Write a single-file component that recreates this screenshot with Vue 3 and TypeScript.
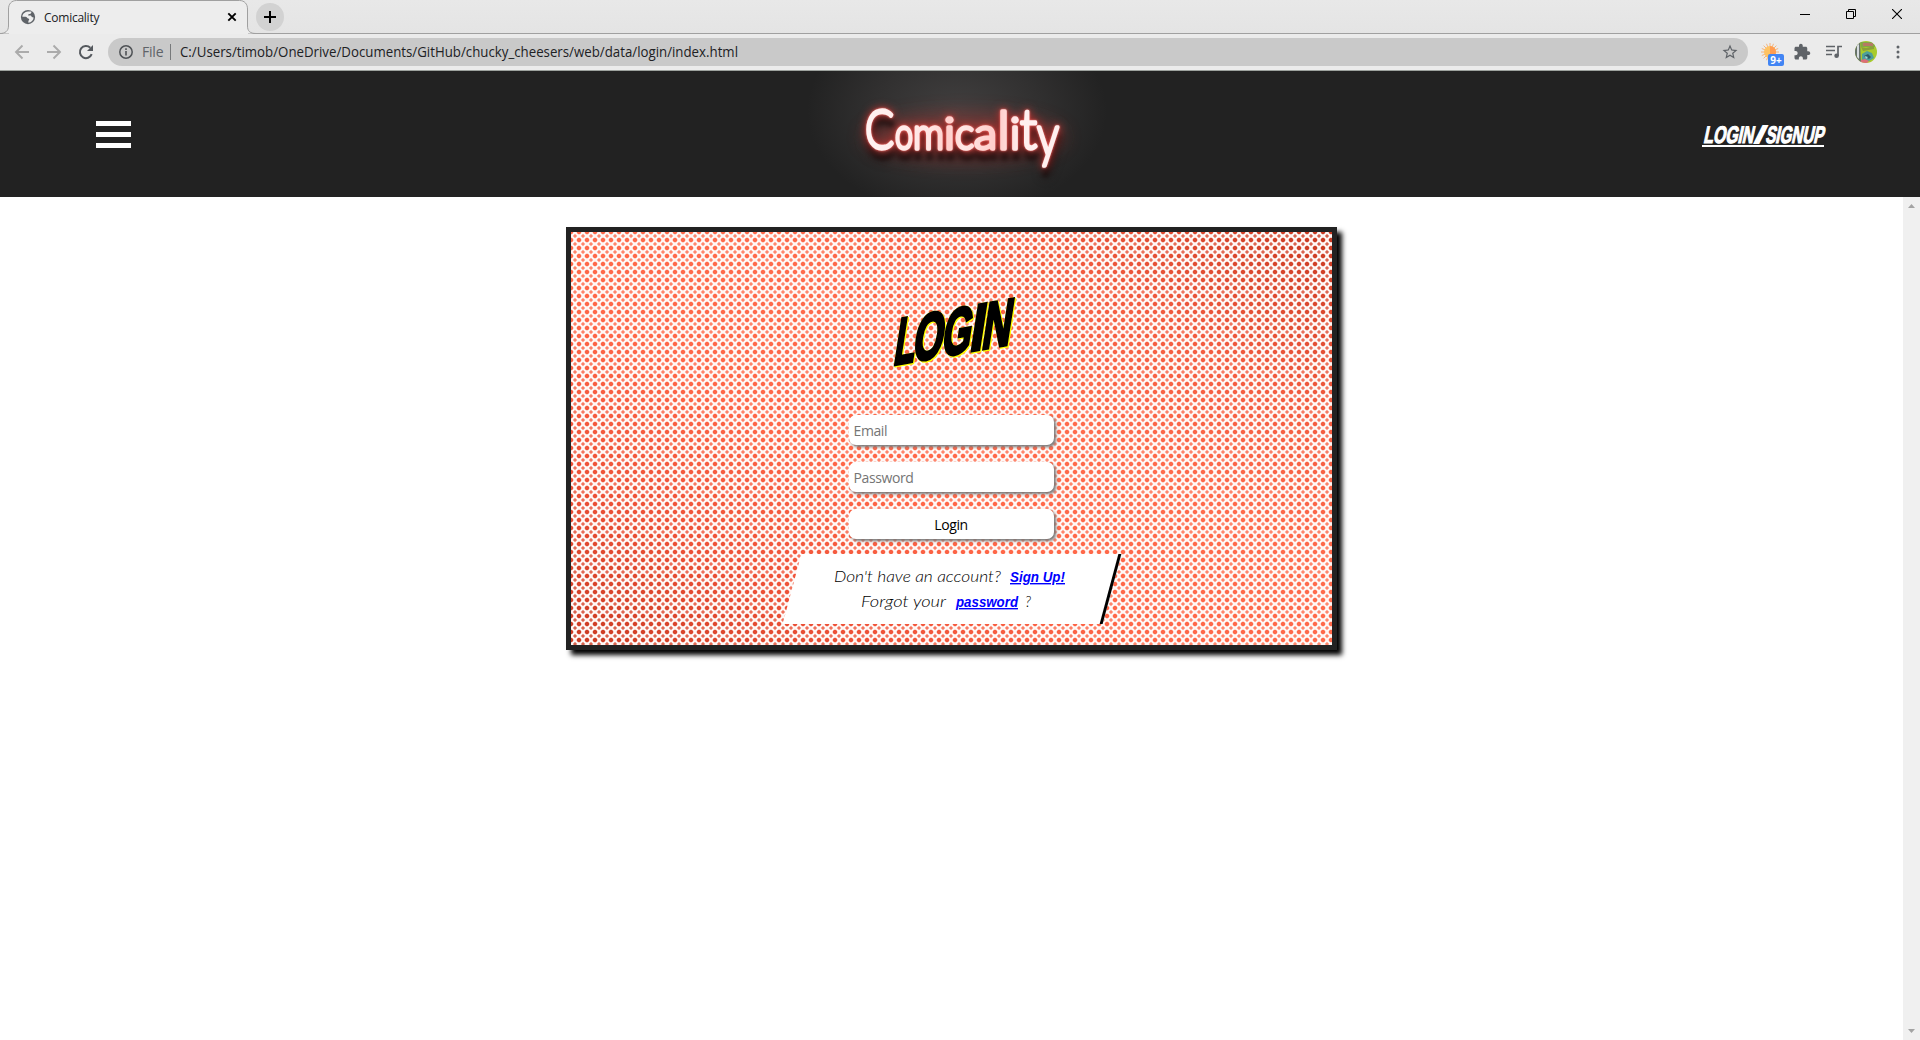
<script setup lang="ts">
import { ref } from 'vue'

interface Glyph { ch: string; x: number; y: number; size: number; w: number }

const email = ref('')
const password = ref('')
const url = 'C:/Users/timob/OneDrive/Documents/GitHub/chucky_cheesers/web/data/login/index.html'

const neon: Glyph[] = [
  { ch: 'C', x: 45, y: 78, size: 56, w: 29 },
  { ch: 'o', x: 75, y: 78, size: 43, w: 18 },
  { ch: 'm', x: 93, y: 78, size: 43, w: 31 },
  { ch: 'i', x: 124, y: 78, size: 43, w: 11 },
  { ch: 'c', x: 135, y: 78, size: 43, w: 19 },
  { ch: 'a', x: 154, y: 78, size: 43, w: 23 },
  { ch: 'l', x: 177, y: 78, size: 54, w: 13 },
  { ch: 'i', x: 190, y: 78, size: 43, w: 10 },
  { ch: 't', x: 200, y: 78, size: 56, w: 17 },
  { ch: 'y', x: 217, y: 85, size: 57, w: 22 },
]
</script>

<template>
  <div class="window">
    <div class="tabs">
      <svg class="tab-shape" width="260" height="34" viewBox="0 0 260 34">
        <path d="M0 33.5C5 33.5 8.500 31 8.500 26V9C8.500 4 11.500.5 16.500.5H239.500C244.500.5 247.500 4 247.500 9V26C247.500 31 250 33.500 256 33.500" fill="#ededed" stroke="#a0a0a0" />
      </svg>
      <div class="tab">
        <svg class="globe" width="18" height="18" viewBox="0 0 24 24"><circle cx="12" cy="12" r="9.500" fill="#5f6368" /><path fill="#eee" d="M12 4.500h4.500c.3 2.200-.8 3.300-3 3.500-1 .2-1.300 1-1.300 2h3c1 0 1.600.8 1.800 2l2.500.5c-.2 3.500-3 6.500-7 7v-2.500c1.500-.3 1.500-2.500 0-3-1.800-.6-2-2.500-3.800-2.500H4.500c0-3.500 3-6.500 7.500-7z" /></svg>
        <span>Comicality</span>
        <svg class="tab-x" width="10" height="10" viewBox="0 0 10 10"><path d="M1.300 1.300l7.400 7.400M8.700 1.300L1.300 8.700" stroke="#000" stroke-width="1.900" /></svg>
      </div>
      <div class="new-tab"><svg width="12" height="12" viewBox="0 0 12 12"><path d="M6 0v12M0 6h12" stroke="#000" stroke-width="2" /></svg></div>
      <div class="controls">
        <svg width="10" height="10" viewBox="0 0 10 10"><path d="M0 5.500h10" stroke="#000" /></svg>
        <svg width="10" height="10" viewBox="0 0 10 10"><path d="M.5 2.500h7v7h-7zM2.500 2.500v-2h7v7h-2" fill="none" stroke="#000" /></svg>
        <svg width="10" height="10" viewBox="0 0 10 10"><path d="M0 0l10 10M10 0L0 10" stroke="#000" stroke-width="1.100" /></svg>
      </div>
    </div>

    <div class="toolbar">
      <svg class="nav" width="16" height="16" viewBox="0 0 16 16"><path d="M15 8H2.500M8.500 1.500L2 8l6.500 6.500" fill="none" stroke="#ababab" stroke-width="1.900" /></svg>
      <svg class="nav" width="16" height="16" viewBox="0 0 16 16"><path d="M1 8h12.500M7.500 1.500L14 8l-6.500 6.500" fill="none" stroke="#ababab" stroke-width="1.900" /></svg>
      <svg class="nav" width="16" height="16" viewBox="0 0 16 16"><path d="M13.700 10.200A6.100 6.100 0 1 1 12.300 3.700" fill="none" stroke="#55595e" stroke-width="2" /><path d="M15 1v6H9z" fill="#55595e" /></svg>
      <div class="address">
        <svg width="14" height="14" viewBox="0 0 14 14"><circle cx="7" cy="7" r="6.200" fill="none" stroke="#4f5256" stroke-width="1.500" /><path d="M7 6v4.500M7 3.300v1.600" stroke="#4f5256" stroke-width="1.600" /></svg>
        <span class="scheme">File</span>
        <span class="sep"></span>
        <svg class="url" width="570" height="26"><text x="0" y="18" textLength="558" lengthAdjust="spacingAndGlyphs">{{ url }}</text></svg>
        <svg class="star" width="18" height="18" viewBox="0 0 24 24"><path fill="#5f6368" d="M22 9.240l-7.190-.62L12 2 9.190 8.630 2 9.240l5.460 4.730L5.820 21 12 17.270 18.180 21l-1.630-7.030L22 9.240zM12 15.400l-3.760 2.270 1-4.280-3.320-2.880 4.380-.38L12 6.100l1.710 4.040 4.380.38-3.320 2.880 1 4.280L12 15.400z" /></svg>
      </div>
      <div class="extensions">
        <div class="weather">
          <svg width="18" height="18" viewBox="0 0 18 18"><path d="M9 0v18M0 9h18M2.600 2.600l12.800 12.800M15.400 2.600L2.600 15.400M5.500.8l7 16.400M12.500.8l-7 16.400M.8 5.500l16.400 7M17.200 5.500L.8 12.500" stroke="#f6a560" stroke-width=".8" /><circle cx="9" cy="9" r="6" fill="#ffc363" /><path d="M9 3a6 6 0 0 1 0 12z" fill="#ff9c52" /></svg>
          <b>9+</b>
        </div>
        <svg class="puzzle" width="18" height="18" viewBox="0 0 24 24"><path fill="#5f6368" d="M20.500 11H19V7c0-1.100-.9-2-2-2h-4V3.500C13 2.120 11.880 1 10.500 1S8 2.120 8 3.500V5H4c-1.100 0-1.990.9-1.990 2v3.800H3.500c1.490 0 2.700 1.210 2.700 2.700s-1.210 2.700-2.700 2.700H2V20c0 1.100.9 2 2 2h3.800v-1.500c0-1.490 1.210-2.700 2.700-2.700 1.490 0 2.700 1.210 2.700 2.700V22H17c1.100 0 2-.9 2-2v-4h1.500c1.380 0 2.500-1.120 2.500-2.500S21.880 11 20.500 11z" /></svg>
        <svg class="queue" width="16" height="14" viewBox="0 0 16 14"><path d="M0 1.500h9M0 5.500h9M0 9.500h6M12 11V1.500h4" fill="none" stroke="#5f6368" stroke-width="1.700" /><circle cx="10.600" cy="10.700" r="2.300" fill="#5f6368" /></svg>
        <svg class="avatar" width="22" height="22" viewBox="0 0 22 22">
          <defs><clipPath id="avatar-clip"><circle cx="11" cy="11" r="11" /></clipPath></defs>
          <g clip-path="url(#avatar-clip)">
            <path d="M0 0h22v22H0z" fill="#a8cb2c" /><path d="M0 0h5l1 22H0z" fill="#66716a" /><path d="M2 4l2-1v15l-2-2z" fill="#d7dce0" />
            <path d="M5 1h15v5H6z" fill="#83a944" /><path d="M8 2h10v3H8z" fill="#b67a64" /><path d="M6 6l5 1 8-2v3l-11 2z" fill="#8b9f3a" />
            <path d="M7 13l5-3 5 2 2 5-5 3-7-1z" fill="#4f9f9a" /><path d="M9 15l4-2 3 3-2 2z" fill="#2b5964" /><path d="M6 19l4-1 4 2-2 2H6z" fill="#db6e77" /><path d="M10 15l3 1-2 2z" fill="#9fd7d5" />
          </g>
        </svg>
        <svg class="more" width="4" height="14" viewBox="0 0 4 14"><g fill="#5f6368"><circle cx="2" cy="2" r="1.500" /><circle cx="2" cy="7" r="1.500" /><circle cx="2" cy="12" r="1.500" /></g></svg>
      </div>
    </div>

    <header class="site-header">
      <div class="burger"><i></i><i></i><i></i></div>
      <svg class="logo" width="320" height="126" viewBox="-20 0 320 126">
        <defs>
          <radialGradient id="wall"><stop offset="0" stop-color="#413f3f" /><stop offset=".55" stop-color="#313030" /><stop offset="1" stop-color="#222" /></radialGradient>
          <filter id="soft" x="-20%" y="-50%" width="140%" height="200%"><feGaussianBlur stdDeviation="9" /></filter>
          <linearGradient id="tube" gradientUnits="userSpaceOnUse" x1="45" y1="0" x2="240" y2="0"><stop offset="0" stop-color="#fff3f2" /><stop offset=".33" stop-color="#ffe5e3" /><stop offset=".43" stop-color="#ffcfcc" /><stop offset=".5" stop-color="#ffe7e5" /><stop offset=".68" stop-color="#ffcbc8" /><stop offset=".8" stop-color="#fff0ef" /></linearGradient>
        </defs>
        <ellipse cx="137" cy="40" rx="150" ry="105" fill="url(#wall)" />
        <ellipse cx="144" cy="66" rx="100" ry="24" fill="#a53532" opacity=".5" filter="url(#soft)" />
        <text class="neon"><tspan v-for="(g, i) in neon" :key="i" :x="g.x" :y="g.y" :font-size="g.size" :textLength="g.w" lengthAdjust="spacingAndGlyphs">{{ g.ch }}</tspan></text>
      </svg>
      <svg class="account" width="130" height="34" viewBox="0 0 130 34">
        <text transform="translate(1 25.500) skewX(-12)"><tspan x="0" textLength="50" lengthAdjust="spacingAndGlyphs">LOGIN</tspan><tspan x="51" textLength="10" lengthAdjust="spacingAndGlyphs">/</tspan><tspan x="62" textLength="58" lengthAdjust="spacingAndGlyphs">SIGNUP</tspan></text>
        <path d="M0 29h122" stroke="#fff" stroke-width="2" />
      </svg>
    </header>

    <div class="page">
      <main>
        <section class="card">
          <svg class="title" width="150" height="90" viewBox="0 0 150 90">
            <text transform="translate(13.500 76) skewY(-10) skewX(-9)"><tspan x="0" textLength="21" lengthAdjust="spacingAndGlyphs">L</tspan><tspan x="19" textLength="30" lengthAdjust="spacingAndGlyphs">O</tspan><tspan x="48" textLength="29" lengthAdjust="spacingAndGlyphs">G</tspan><tspan x="76" textLength="14" lengthAdjust="spacingAndGlyphs">I</tspan><tspan x="88" textLength="29" lengthAdjust="spacingAndGlyphs">N</tspan></text>
          </svg>
          <form @submit.prevent>
            <input v-model="email" type="email" placeholder="Email">
            <input v-model="password" type="password" placeholder="Password">
            <button type="submit">Login</button>
          </form>
          <div class="info">
            <svg width="300" height="70" viewBox="0 0 300 70">
              <g class="light"><text x="34" y="28" textLength="167" lengthAdjust="spacingAndGlyphs">Don't have an account?</text><text x="61" y="53" textLength="85" lengthAdjust="spacingAndGlyphs">Forgot your</text><text x="225" y="53">?</text></g>
              <a><text x="210" y="28" textLength="55" lengthAdjust="spacingAndGlyphs">Sign Up!</text></a>
              <a><text x="156" y="53" textLength="62" lengthAdjust="spacingAndGlyphs">password</text></a>
            </svg>
          </div>
        </section>
      </main>
      <div class="scrollbar">
        <svg width="7" height="4" viewBox="0 0 7 4"><path d="M0 4L3.500 0 7 4z" fill="#a3a3a3" /></svg>
        <svg width="7" height="4" viewBox="0 0 7 4"><path d="M0 0l3.500 4L7 0z" fill="#a3a3a3" /></svg>
      </div>
    </div>
  </div>
</template>

<style>
body { margin: 0; overflow: hidden; }
</style>

<style scoped>
* { box-sizing: border-box; }
svg { display: block; flex: none; }
.window { width: 1920px; height: 1040px; display: flex; flex-direction: column; background: #fff; font-family: "Open Sans", "Noto Sans", sans-serif; overflow: hidden; }
.tabs { position: relative; height: 34px; flex: none; display: flex; align-items: center; background: linear-gradient(#e8e8e8, #e4e4e4); box-shadow: inset 0 -1px #a0a0a0; }
.tab-shape { position: absolute; left: 0; top: 0; background: linear-gradient(#ededed, #ededed) 9px 33px / 239px 1px no-repeat; }
.tab { position: relative; width: 247px; height: 34px; display: flex; align-items: center; padding-left: 19px; font-size: 12px; color: #202124; letter-spacing: -.25px; }
.tab span { margin-left: 7px; flex: 1; position: relative; }
.tab-x { margin-right: 10px; }
.new-tab { width: 28px; height: 28px; margin-left: 9px; border-radius: 50%; background: #d2d2d2; display: flex; align-items: center; justify-content: center; position: relative; }
.controls { display: flex; gap: 36px; margin-left: auto; margin-right: 18px; margin-bottom: 6px; }
.toolbar { height: 37px; flex: none; display: flex; align-items: center; padding: 0 0 1px 14px; background: #ebebeb; border-bottom: 1px solid #9da29e; }
.nav { margin-right: 16px; }
.nav:nth-child(3) { margin-right: 14px; }
.address { width: 1640px; height: 28px; border-radius: 14px; background: #c9c9c9; display: flex; align-items: center; padding: 0 9px 0 11px; }
.scheme { color: #5f6368; font-size: 14px; margin-left: 9px; width: 28px; letter-spacing: -.2px; }
.sep { width: 1px; height: 16px; background: #77797b; }
.url { margin-left: 9px; overflow: visible; font: 14px "Open Sans", sans-serif; fill: #202124; }
.star { margin-left: auto; }
.extensions { display: flex; align-items: center; height: 28px; flex: 1; position: relative; }
.weather { position: relative; width: 18px; margin-left: 13px; margin-right: 14px; }
.weather b { position: absolute; left: 7px; top: 11px; width: 16px; height: 12px; border-radius: 2px; background: #4285f4; color: #fff; font: bold 10px/13px "Open Sans", sans-serif; text-align: center; }
.puzzle { margin-right: 15px; }
.queue { margin-right: 13px; }
.avatar { margin-right: 19px; }
.site-header { height: 126px; flex: none; background: #222; display: flex; align-items: center; padding: 0 90px 0 96px; }
.burger { display: flex; flex-direction: column; gap: 6px; width: 35px; }
.burger i { height: 5px; background: #fff; }
.logo { margin-left: 669px; }
.neon { font-family: Lato, sans-serif; font-weight: 300; fill: url(#tube); stroke: url(#tube); stroke-width: 3.400px; stroke-linejoin: round; filter: drop-shadow(0 0 1px #ff7772) drop-shadow(0 0 4px #c93532) drop-shadow(1px 9px 2px #160b0bcc); }
.account { margin-left: auto; margin-right: -2px; overflow: visible; font: bold 24px "Liberation Sans Narrow", "Liberation Sans", sans-serif; fill: #fff; stroke: #fff; stroke-width: 1.200px; }
.page { flex: 1; display: flex; min-height: 0; }
main { flex: 1; padding: 30px 0 0 566px; }
.card { position: relative; isolation: isolate; width: 771px; height: 423px; border: 5px solid #222; box-shadow: 5px 5px 5px #000; display: flex; flex-direction: column; align-items: center; background: #fff8f6; }
.card::before { content: ""; position: absolute; inset: 0; z-index: -1; background: linear-gradient(30deg, #c93a22 0%, #ed5137 20%, #ff6748 40%, #ff6b4c 60%, #f35c40 78%, #c73820 100%); mask-image: radial-gradient(circle at 4px 4px, #000 1.600px, #000b 1.700px, #0008 2.300px, transparent 2.700px), radial-gradient(circle at 4px 4px, #000c 1px, #0007 1.600px, transparent 2px); mask-size: 8px 8px; mask-position: -4px -4px, 0 0; }
.title { margin-top: 57px; margin-left: 4px; overflow: visible; font: bold 65px "Liberation Sans Narrow", "Liberation Sans", sans-serif; fill: #000; stroke: #000; stroke-width: 3.200px; filter: drop-shadow(1px 1px #ff0) drop-shadow(.5px .5px #ff0); }
form { display: flex; flex-direction: column; gap: 17px; margin-top: 36px; margin-right: 1px; }
input, button { display: block; width: 205px; height: 30px; border: 0; border-radius: 7px; background: #fff; box-shadow: 2px 2px 3px #777; padding: 0 5px; outline: 0; font: 14px "Open Sans", sans-serif; letter-spacing: -.4px; color: #000; }
input::placeholder { color: #757575; opacity: 1; }
.info { width: 320px; height: 70px; margin-top: 15px; background: #fff; border-right: 3px solid #000; transform: skewX(-15deg); }
.info svg { transform: skewX(15deg); margin-left: 8px; font-family: Lato, sans-serif; font-size: 15px; }
.light { font-weight: 300; font-style: italic; fill: #000; }
.info a { font: italic bold 14px "Liberation Sans", sans-serif; fill: #00f; text-decoration: underline; }
.scrollbar { width: 17px; background: #f0f0f0; display: flex; flex-direction: column; justify-content: space-between; align-items: center; padding: 7px 0; }
</style>
